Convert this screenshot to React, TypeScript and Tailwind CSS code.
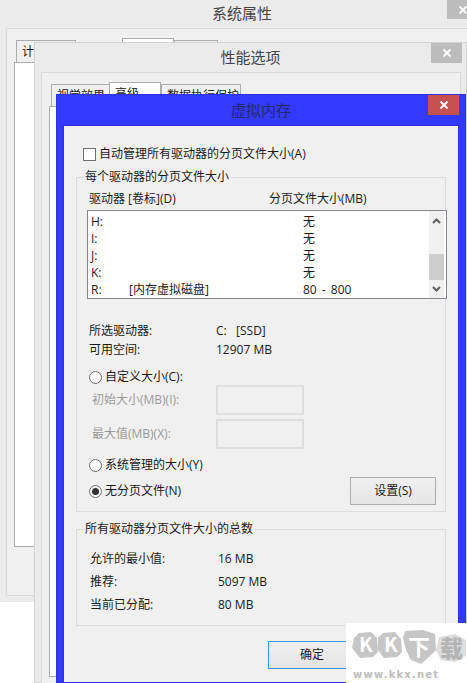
const font = { fontFamily: '"Open Sans", "Noto Sans CJK SC", sans-serif' };

function Radio({ checked, label }: { checked?: boolean; label: string }) {
  return (
    <div className="flex h-[14px] items-center gap-[3px]">
      <span className="flex h-[13px] w-[13px] items-center justify-center rounded-full border border-[#707070] bg-white">
        {checked && <span className="h-[7px] w-[7px] rounded-full bg-[#333333]" />}
      </span>
      <span>{label}</span>
    </div>
  );
}

function Close({ color, className }: { color: string; className: string }) {
  return (
    <div className={`absolute top-px flex items-center justify-center ${color} ${className}`}>
      <svg width="10" height="10" viewBox="0 0 10 10">
        <path d="M1.5 1.5 8.5 8.5M8.5 1.5 1.5 8.5" stroke="#ffffff" strokeWidth="1.8" />
      </svg>
    </div>
  );
}

function Legend({ children }: { children: string }) {
  return (
    <div className="absolute left-[7px] top-[-9px] bg-[#f0f0f0] px-px leading-[16px]">{children}</div>
  );
}

function Tab({ label, active, className }: { label: string; active?: boolean; className: string }) {
  return (
    <div
      className={`absolute border border-b-0 border-[#acacac] pl-[5px] pt-[3px] leading-[16px] ${active ? "bg-white" : "bg-[#f0f0f0]"} ${className}`}
    >
      {label}
    </div>
  );
}

// 水印 logo: grey rocks with the letters knocked out
function KkLogo() {
  return (
    <svg width="116" height="36" viewBox="0 0 116 36">
      <g fill="#c6c6c6">
        <path d="M8 3 20 2 26 8 27 22 22 27 9 28 1 18 3 8Z" />
        <path d="M32 3 44 2 50 9 51 22 46 27 33 28 27 20 27 8Z" />
        <path d="M54 1 72 0 84 4 85 20 78 27 70 34 60 30 55 20 52 8Z" />
      </g>
      <g fill="#ffffff" fontFamily='"Noto Sans CJK SC", sans-serif' fontWeight="700">
        <text x="8" y="22" fontSize="20">K</text>
        <text x="33" y="22" fontSize="20">K</text>
        <text x="57" y="25" fontSize="22">下</text>
      </g>
      <path d="M88 7 104 4 115 10 115 26 104 32 90 30 85 20Z" fill="#dedede" />
      <text x="89" y="27" fontSize="23" fontWeight="900" fill="#b4b4b4" fontFamily='"Noto Sans CJK SC", sans-serif'>载</text>
    </svg>
  );
}

const drives = [
  { id: "H:", size: "无" },
  { id: "I:", size: "无" },
  { id: "J:", size: "无" },
  { id: "K:", size: "无" },
  { id: "R:", label: "[内存虚拟磁盘]", size: "80 - 800" },
];

const totals = [
  { label: "允许的最小值:", value: "16 MB", cls: "h-[23px]" },
  { label: "推荐:", value: "5097 MB", cls: "h-[23px]" },
  { label: "当前已分配:", value: "80 MB", cls: "h-[24px]" },
];

function VirtualMemory() {
  return (
    <div className="absolute left-[56px] top-[94px] h-[589px] w-[410px] border border-[#2c32d8] bg-[#3339ff] text-[#1a1a1a]">
      <div className="pt-[3px] text-center text-[15px] leading-[24px] text-[#232a70]">虚拟内存</div>
      <Close color="bg-[#c75050]" className="right-[6px] !top-0 h-[20px] w-[31px]" />
      <div className="absolute left-[6px] top-[30px] h-[558px] w-[396px] border border-[#2c32d8] bg-[#f0f0f0] pl-[12px]">
        <div className="flex items-center gap-[3px] pl-[7px] pt-[21px] leading-[14px]">
          <span className="h-[13px] w-[13px] border border-[#707070] bg-white" />
          <span>自动管理所有驱动器的分页文件大小(A)</span>
        </div>

        <div className="relative mt-[16px] h-[335px] w-[370px] border border-[#dcdcdc]">
          <Legend>每个驱动器的分页文件大小</Legend>
          <div className="flex pl-[12px] pt-[13px] leading-[16px]">
            <span className="w-[180px]">驱动器 [卷标](D)</span>
            <span>分页文件大小(MB)</span>
          </div>
          <div className="ml-[10px] mt-[3px] flex h-[89px] w-[360px] border border-[#828790] bg-white">
            <div className="flex-1 pl-[3px] pt-[2px]">
              {drives.map((d) => (
                <div key={d.id} className="flex h-[17px] items-center">
                  <span className="w-[38px]">{d.id}</span>
                  <span className="w-[174px]">{d.label}</span>
                  <span className="[word-spacing:2px]">{d.size}</span>
                </div>
              ))}
            </div>
            <div className="mr-[2px] flex w-[15px] flex-col bg-[#f0f0f0] pt-[1px]">
              <div className="flex h-[17px] items-center justify-center">
                <svg width="9" height="6" viewBox="0 0 9 6">
                  <path d="M1 5 4.5 1.5 8 5" fill="none" stroke="#606060" strokeWidth="2" />
                </svg>
              </div>
              <div className="mt-[25px] h-[26px] bg-[#cdcdcd]" />
              <div className="flex h-[17px] items-center justify-center">
                <svg width="9" height="6" viewBox="0 0 9 6">
                  <path d="M1 1 4.5 4.5 8 1" fill="none" stroke="#606060" strokeWidth="2" />
                </svg>
              </div>
            </div>
          </div>

          <div className="grid grid-cols-[127px_1fr] pl-[12px] pt-[22px] leading-[19px]">
            <span>所选驱动器:</span>
            <span>C:&nbsp;&nbsp;&nbsp;[SSD]</span>
            <span>可用空间:</span>
            <span>12907 MB</span>
          </div>

          <div className="pl-[12px] pt-[11px]">
            <Radio label="自定义大小(C):" />
            <div className="mt-[1px] flex h-[30px] items-center text-[#9a9a9a]">
              <span className="w-[127px] pl-[3px]">初始大小(MB)(I):</span>
              <span className="h-[30px] w-[88px] border-2 border-[#dddddd]" />
            </div>
            <div className="mt-[4px] flex h-[30px] items-center text-[#9a9a9a]">
              <span className="w-[127px] pl-[3px]">最大值(MB)(X):</span>
              <span className="h-[30px] w-[88px] border-2 border-[#dddddd]" />
            </div>
            <div className="pt-[9px]">
              <Radio label="系统管理的大小(Y)" />
            </div>
            <div className="mt-[5px] flex h-[28px] items-center justify-between pr-[9px]">
              <Radio checked label="无分页文件(N)" />
              <button className="h-[28px] w-[86px] border border-[#acacac] bg-gradient-to-b from-[#f0f0f0] to-[#e5e5e5]">
                设置(S)
              </button>
            </div>
          </div>
        </div>

        <div className="relative mt-[17px] h-[97px] w-[370px] border border-[#dcdcdc]">
          <Legend>所有驱动器分页文件大小的总数</Legend>
          <div className="pl-[13px] pt-[17px]">
            {totals.map((t) => (
              <div key={t.label} className={`flex items-center ${t.cls}`}>
                <span className="w-[128px]">{t.label}</span>
                <span>{t.value}</span>
              </div>
            ))}
          </div>
        </div>

        <button className="ml-[192px] mt-[15px] h-[28px] w-[88px] border border-[#3399ff] bg-gradient-to-b from-[#f0f0f0] to-[#e5e5e5]">
          确定
        </button>
      </div>
    </div>
  );
}

export default function App() {
  return (
    <div className="relative h-[683px] w-[467px] overflow-hidden bg-white text-[12px] text-[#1a1a1a]" style={font}>
      {/* 系统属性 */}
      <div className="absolute left-0 top-0 h-[602px] w-[484px] bg-[#ebebeb]">
        <div className="pt-px text-center text-[15px] leading-[24px] text-[#444444]">系统属性</div>
        <Close color="bg-[#bcbcbc]" className="left-[447px] !top-0 h-[19px] w-[31px]" />
        <div className="absolute left-[6px] top-[28px] h-[568px] w-[470px] border border-[#d9d9d9] bg-[#f0f0f0]">
          <Tab label="计算机名" className="left-[9px] top-[11px] h-[22px] w-[60px]" />
          <Tab label="" active className="left-[115px] top-[9px] h-[24px] w-[52px]" />
          <Tab label="" className="left-[167px] top-[11px] h-[22px] w-[44px]" />
          <div className="absolute left-[7px] top-[33px] h-[485px] w-[450px] border border-[#acacac] bg-white" />
        </div>
      </div>

      {/* 性能选项 */}
      <div className="absolute left-[34px] top-[42px] h-[641px] w-[433px] border border-[#d4d4d4] bg-[#ebebeb]">
        <div className="pt-[2px] text-center text-[15px] leading-[24px] text-[#444444]">性能选项</div>
        <Close color="bg-[#bcbcbc]" className="right-[4px] !top-0 h-[20px] w-[31px]" />
        <div className="absolute left-[6px] top-[29px] h-[612px] w-[420px] border border-[#d9d9d9] bg-[#f0f0f0]">
          <Tab label="视觉效果" className="left-[9px] top-[11px] h-[24px] w-[59px]" />
          <Tab label="高级" active className="left-[67px] top-[9px] h-[26px] w-[52px]" />
          <Tab label="数据执行保护" className="left-[119px] top-[11px] h-[24px] w-[80px]" />
          <div className="absolute left-[7px] top-[33px] h-[571px] w-[405px] border border-[#acacac] bg-white" />
        </div>
      </div>

      <VirtualMemory />

      {/* 水印 */}
      <div className="absolute left-[346px] top-[623px] flex h-[60px] w-[121px] flex-col bg-white pl-[5px] pt-[7px] text-[#bdbdbd]">
        <KkLogo />
        <div className="mt-[3px] pl-[2px] text-[10px] font-bold leading-[12px] tracking-[1.2px]" style={{ fontFamily: '"DejaVu Sans", sans-serif' }}>
          www.kkx.net
        </div>
      </div>
    </div>
  );
}
